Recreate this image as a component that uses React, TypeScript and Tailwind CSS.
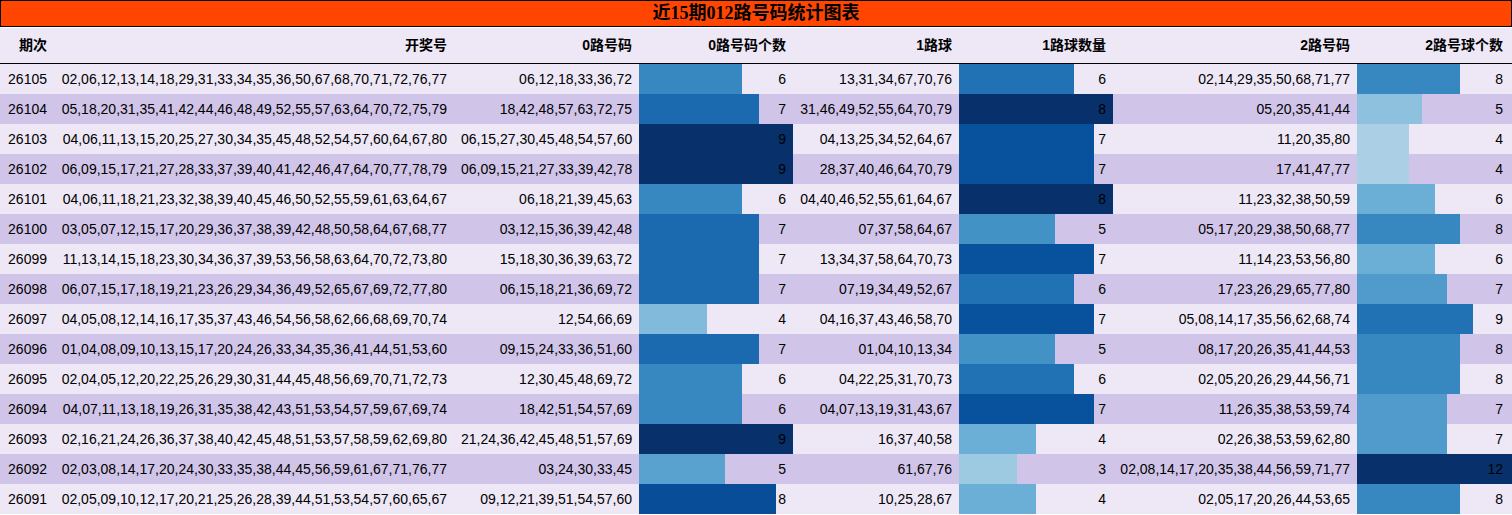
import React from "react";

type Row = [string, string, string, number, string, number, string, number];

const rows: Row[] = [
  ["26105", "02,06,12,13,14,18,29,31,33,34,35,36,50,67,68,70,71,72,76,77", "06,12,18,33,36,72", 6, "13,31,34,67,70,76", 6, "02,14,29,35,50,68,71,77", 8],
  ["26104", "05,18,20,31,35,41,42,44,46,48,49,52,55,57,63,64,70,72,75,79", "18,42,48,57,63,72,75", 7, "31,46,49,52,55,64,70,79", 8, "05,20,35,41,44", 5],
  ["26103", "04,06,11,13,15,20,25,27,30,34,35,45,48,52,54,57,60,64,67,80", "06,15,27,30,45,48,54,57,60", 9, "04,13,25,34,52,64,67", 7, "11,20,35,80", 4],
  ["26102", "06,09,15,17,21,27,28,33,37,39,40,41,42,46,47,64,70,77,78,79", "06,09,15,21,27,33,39,42,78", 9, "28,37,40,46,64,70,79", 7, "17,41,47,77", 4],
  ["26101", "04,06,11,18,21,23,32,38,39,40,45,46,50,52,55,59,61,63,64,67", "06,18,21,39,45,63", 6, "04,40,46,52,55,61,64,67", 8, "11,23,32,38,50,59", 6],
  ["26100", "03,05,07,12,15,17,20,29,36,37,38,39,42,48,50,58,64,67,68,77", "03,12,15,36,39,42,48", 7, "07,37,58,64,67", 5, "05,17,20,29,38,50,68,77", 8],
  ["26099", "11,13,14,15,18,23,30,34,36,37,39,53,56,58,63,64,70,72,73,80", "15,18,30,36,39,63,72", 7, "13,34,37,58,64,70,73", 7, "11,14,23,53,56,80", 6],
  ["26098", "06,07,15,17,18,19,21,23,26,29,34,36,49,52,65,67,69,72,77,80", "06,15,18,21,36,69,72", 7, "07,19,34,49,52,67", 6, "17,23,26,29,65,77,80", 7],
  ["26097", "04,05,08,12,14,16,17,35,37,43,46,54,56,58,62,66,68,69,70,74", "12,54,66,69", 4, "04,16,37,43,46,58,70", 7, "05,08,14,17,35,56,62,68,74", 9],
  ["26096", "01,04,08,09,10,13,15,17,20,24,26,33,34,35,36,41,44,51,53,60", "09,15,24,33,36,51,60", 7, "01,04,10,13,34", 5, "08,17,20,26,35,41,44,53", 8],
  ["26095", "02,04,05,12,20,22,25,26,29,30,31,44,45,48,56,69,70,71,72,73", "12,30,45,48,69,72", 6, "04,22,25,31,70,73", 6, "02,05,20,26,29,44,56,71", 8],
  ["26094", "04,07,11,13,18,19,26,31,35,38,42,43,51,53,54,57,59,67,69,74", "18,42,51,54,57,69", 6, "04,07,13,19,31,43,67", 7, "11,26,35,38,53,59,74", 7],
  ["26093", "02,16,21,24,26,36,37,38,40,42,45,48,51,53,57,58,59,62,69,80", "21,24,36,42,45,48,51,57,69", 9, "16,37,40,58", 4, "02,26,38,53,59,62,80", 7],
  ["26092", "02,03,08,14,17,20,24,30,33,35,38,44,45,56,59,61,67,71,76,77", "03,24,30,33,45", 5, "61,67,76", 3, "02,08,14,17,20,35,38,44,56,59,71,77", 12],
  ["26091", "02,05,09,10,12,17,20,21,25,26,28,39,44,51,53,54,57,60,65,67", "09,12,21,39,51,54,57,60", 8, "10,25,28,67", 4, "02,05,17,20,26,44,53,65", 8],
];

const stops: [number, number, number][] = [
  [247, 251, 255],
  [222, 235, 247],
  [198, 219, 239],
  [158, 202, 225],
  [107, 174, 214],
  [66, 146, 198],
  [33, 113, 181],
  [8, 81, 156],
  [8, 48, 107],
];

function blues(t: number): string {
  const x = Math.max(0, Math.min(1, t)) * 8;
  const i = Math.min(7, Math.floor(x));
  const f = x - i;
  const a = stops[i];
  const b = stops[i + 1];
  const c = a.map((v, k) => Math.round(v + (b[k] - v) * f));
  return `rgb(${c[0]},${c[1]},${c[2]})`;
}

const max0 = Math.max(...rows.map((r) => r[3]));
const max1 = Math.max(...rows.map((r) => r[5]));
const max2 = Math.max(...rows.map((r) => r[7]));

function BarCell({ value, max, last }: { value: number; max: number; last?: boolean }) {
  const pct = (value / max) * 100;
  const color = blues(value / max);
  return (
    <div
      className={`h-[30px] pl-[7px] text-right leading-[30px] ${last ? "pr-[9px]" : "pr-[7px]"}`}
      style={{ background: `linear-gradient(90deg, ${color} ${pct}%, transparent ${pct}%)` }}
    >
      {value}
    </div>
  );
}

const headers = ["期次", "开奖号", "0路号码", "0路号码个数", "1路球", "1路球数量", "2路号码", "2路号球个数"];

export default function App() {
  return (
    <div
      className="w-[1512px] bg-white text-black"
      style={{ fontFamily: '"Liberation Sans", Arial, "Noto Sans CJK SC", sans-serif' }}
    >
      <div
        className="h-[27px] border border-black bg-[#ff4500] text-center text-[18px] font-bold leading-[25px]"
        style={{ fontFamily: '"Liberation Serif", "Noto Sans CJK SC", serif' }}
      >
        近15期012路号码统计图表
      </div>
      <div className="mt-px grid grid-cols-[54px_400px_185px_154px_166px_154px_244px_155px] text-[14px]">
        {headers.map((h, i) => (
          <div
            key={h}
            className={`h-[36px] border-b border-black bg-[#ede7f6] pl-[7px] text-right font-bold leading-[35px] ${
              i === headers.length - 1 ? "pr-[9px]" : "pr-[7px]"
            }`}
          >
            {h}
          </div>
        ))}
        {rows.map((r, i) => {
          const bg = i % 2 === 0 ? "bg-[#ede7f6]" : "bg-[#d1c4e9]";
          return (
            <React.Fragment key={r[0]}>
              <div className={`h-[30px] px-[7px] text-right leading-[30px] ${bg}`}>{r[0]}</div>
              <div className={`h-[30px] px-[7px] text-right leading-[30px] ${bg}`}>{r[1]}</div>
              <div className={`h-[30px] px-[7px] text-right leading-[30px] ${bg}`}>{r[2]}</div>
              <div className={bg}>
                <BarCell value={r[3]} max={max0} />
              </div>
              <div className={`h-[30px] px-[7px] text-right leading-[30px] ${bg}`}>{r[4]}</div>
              <div className={bg}>
                <BarCell value={r[5]} max={max1} />
              </div>
              <div className={`h-[30px] px-[7px] text-right leading-[30px] ${bg}`}>{r[6]}</div>
              <div className={bg}>
                <BarCell value={r[7]} max={max2} last />
              </div>
            </React.Fragment>
          );
        })}
      </div>
    </div>
  );
}
